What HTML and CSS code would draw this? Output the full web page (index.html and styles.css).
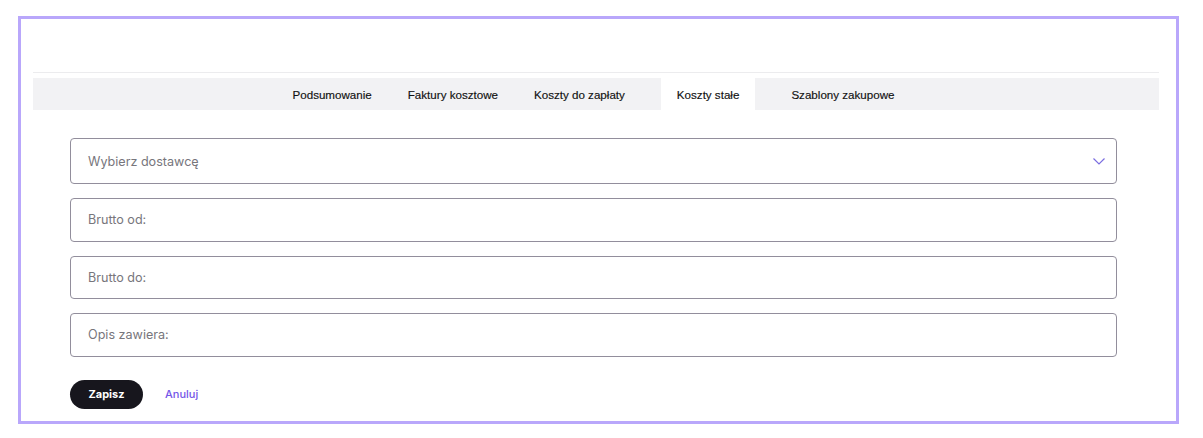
FILE: index.html
```html
<!DOCTYPE html>
<html lang="pl">
<head>
<meta charset="utf-8">
<link rel="stylesheet" href="styles.css">
</head>
<body>
<div class="frame">
  <div class="header"></div>
  <nav class="tabs">
    <span class="tab">Podsumowanie</span>
    <span class="tab">Faktury kosztowe</span>
    <span class="tab">Koszty do zapłaty</span>
    <span class="tab active">Koszty stałe</span>
    <span class="tab">Szablony zakupowe</span>
  </nav>
  <form class="form">
    <div class="field select">
      <span class="placeholder">Wybierz dostawcę</span>
      <svg class="chevron" width="12" height="7" viewBox="0 0 12 7"><path d="M0.5 0.5 L6 6 L11.5 0.5" fill="none" stroke="#7b6ee0" stroke-width="1.2"/></svg>
    </div>
    <div class="field"><span class="placeholder">Brutto od:</span></div>
    <div class="field"><span class="placeholder">Brutto do:</span></div>
    <div class="field"><span class="placeholder">Opis zawiera:</span></div>
    <div class="actions">
      <button type="button" class="btn-save">Zapisz</button>
      <a class="cancel">Anuluj</a>
    </div>
  </form>
</div>
</body>
</html>
```
FILE: styles.css
```css
* { box-sizing: border-box; }
html, body { margin: 0; padding: 0; background: #fff; }
body { padding: 16px 0 0 18px; font-family: Inter, "Noto Sans", sans-serif; }
.frame {
  width: 1161px;
  height: 408px;
  border: 3px solid #b9a7fb;
  padding: 0 17px 0 12px;
}
.header {
  height: 54px;
  border-bottom: 1px solid #ececee;
  margin-bottom: 5px;
}
.tabs {
  height: 32px;
  background: #f2f2f4;
  display: flex;
  justify-content: center;
  align-items: stretch;
  gap: 4px;
  padding-right: 5px;
}
.tab {
  display: flex;
  align-items: center;
  padding: 0 16px;
  font-family: "Liberation Sans", Arial, sans-serif;
  font-size: 11.6px;
  color: #111;
  -webkit-text-stroke: 0.15px #111;
}
.tab.active {
  background: #fff;
  margin: 0 16px;
}
.form {
  padding: 28px 42px 0 37px;
  display: flex;
  flex-direction: column;
  gap: 14px;
}
.field {
  height: 43.5px;
  border: 1px solid #928e9c;
  border-radius: 4px;
  display: flex;
  align-items: center;
  padding: 0 17px;
}
.field.select {
  height: 46px;
  justify-content: space-between;
  padding-right: 11px;
}
.placeholder {
  font-size: 12.6px;
  color: #77767c;
  font-weight: 400;
}
.chevron { display: block; }
.actions {
  display: flex;
  align-items: center;
  gap: 22px;
  margin-top: 9px;
}
.btn-save {
  height: 29px;
  width: 73px;
  border: none;
  border-radius: 15px;
  background: #17161d;
  color: #fff;
  font-family: Inter, sans-serif;
  font-weight: 700;
  font-size: 11px;
  padding: 0;
}
.cancel {
  font-size: 11px;
  font-weight: 500;
  color: #7456e8;
}
```
